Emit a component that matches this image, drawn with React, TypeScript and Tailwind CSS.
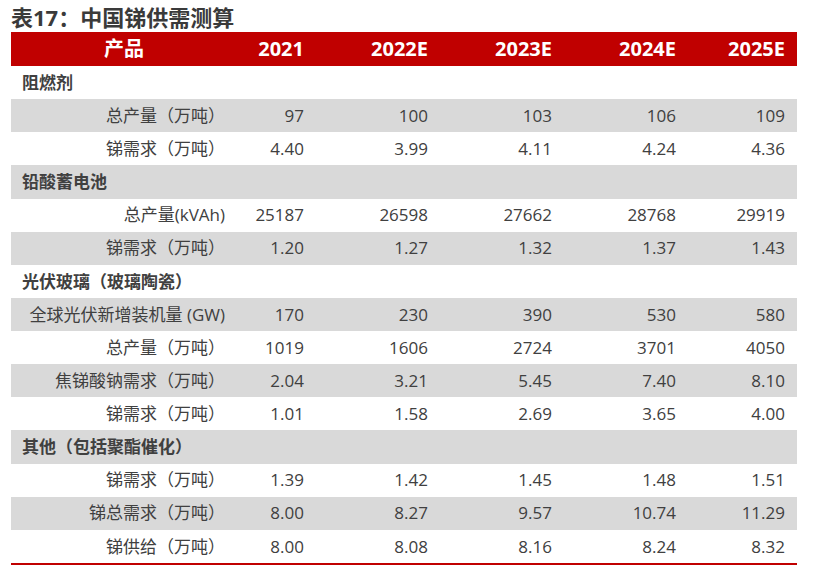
import React from "react";

type Row = { kind: "section"; label: string } | { kind: "data"; label: string; values: string[] };

const rows: Row[] = [
  { kind: "section", label: "阻燃剂" },
  { kind: "data", label: "总产量（万吨）", values: ["97", "100", "103", "106", "109"] },
  { kind: "data", label: "锑需求（万吨）", values: ["4.40", "3.99", "4.11", "4.24", "4.36"] },
  { kind: "section", label: "铅酸蓄电池" },
  { kind: "data", label: "总产量(kVAh)", values: ["25187", "26598", "27662", "28768", "29919"] },
  { kind: "data", label: "锑需求（万吨）", values: ["1.20", "1.27", "1.32", "1.37", "1.43"] },
  { kind: "section", label: "光伏玻璃（玻璃陶瓷）" },
  { kind: "data", label: "全球光伏新增装机量 (GW)", values: ["170", "230", "390", "530", "580"] },
  { kind: "data", label: "总产量（万吨）", values: ["1019", "1606", "2724", "3701", "4050"] },
  { kind: "data", label: "焦锑酸钠需求（万吨）", values: ["2.04", "3.21", "5.45", "7.40", "8.10"] },
  { kind: "data", label: "锑需求（万吨）", values: ["1.01", "1.58", "2.69", "3.65", "4.00"] },
  { kind: "section", label: "其他（包括聚酯催化）" },
  { kind: "data", label: "锑需求（万吨）", values: ["1.39", "1.42", "1.45", "1.48", "1.51"] },
  { kind: "data", label: "锑总需求（万吨）", values: ["8.00", "8.27", "9.57", "10.74", "11.29"] },
  { kind: "data", label: "锑供给（万吨）", values: ["8.00", "8.08", "8.16", "8.24", "8.32"] },
];

const years = ["2021", "2022E", "2023E", "2024E", "2025E"];
const colW = ["w-[79px]", "w-[124px]", "w-[124px]", "w-[124px]", "w-[109px]"];

export default function App() {
  return (
    <div className="w-[824px] h-[574px] bg-white font-['Open_Sans','Noto_Sans_CJK_SC',sans-serif] text-[#404040]">
      <div className="h-[32px] pl-[11px] flex items-center text-[22px] font-bold leading-none pt-[2px] text-[#3a3a3a]">
        表17：中国锑供需测算
      </div>
      <div className="ml-[11px] w-[786px]">
        <div className="h-[34px] bg-[#c00000] text-white font-bold text-[20px] flex items-center">
          <div className="w-[226px] text-center">产品</div>
          {years.map((y, i) => (
            <div key={y} className={`${colW[i]} text-right pr-[12px]`}>
              {y}
            </div>
          ))}
        </div>
        {rows.map((r, idx) => {
          const bg = idx % 2 === 1 ? "bg-[#d9d9d9]" : "bg-white";
          if (r.kind === "section") {
            return (
              <div key={idx} className={`h-[33.13px] ${bg} flex items-center pl-[11px] text-[17px] font-bold whitespace-nowrap`}>
                {r.label}
              </div>
            );
          }
          return (
            <div key={idx} className={`h-[33.13px] ${bg} flex items-center text-[17px] whitespace-nowrap`}>
              <div className="w-[226px] text-right pr-[12px]">{r.label}</div>
              {r.values.map((v, i) => (
                <div key={i} className={`${colW[i]} text-right pr-[12px]`}>
                  {v}
                </div>
              ))}
            </div>
          );
        })}
        <div className="h-[2px] bg-[#c00000]" />
      </div>
    </div>
  );
}
